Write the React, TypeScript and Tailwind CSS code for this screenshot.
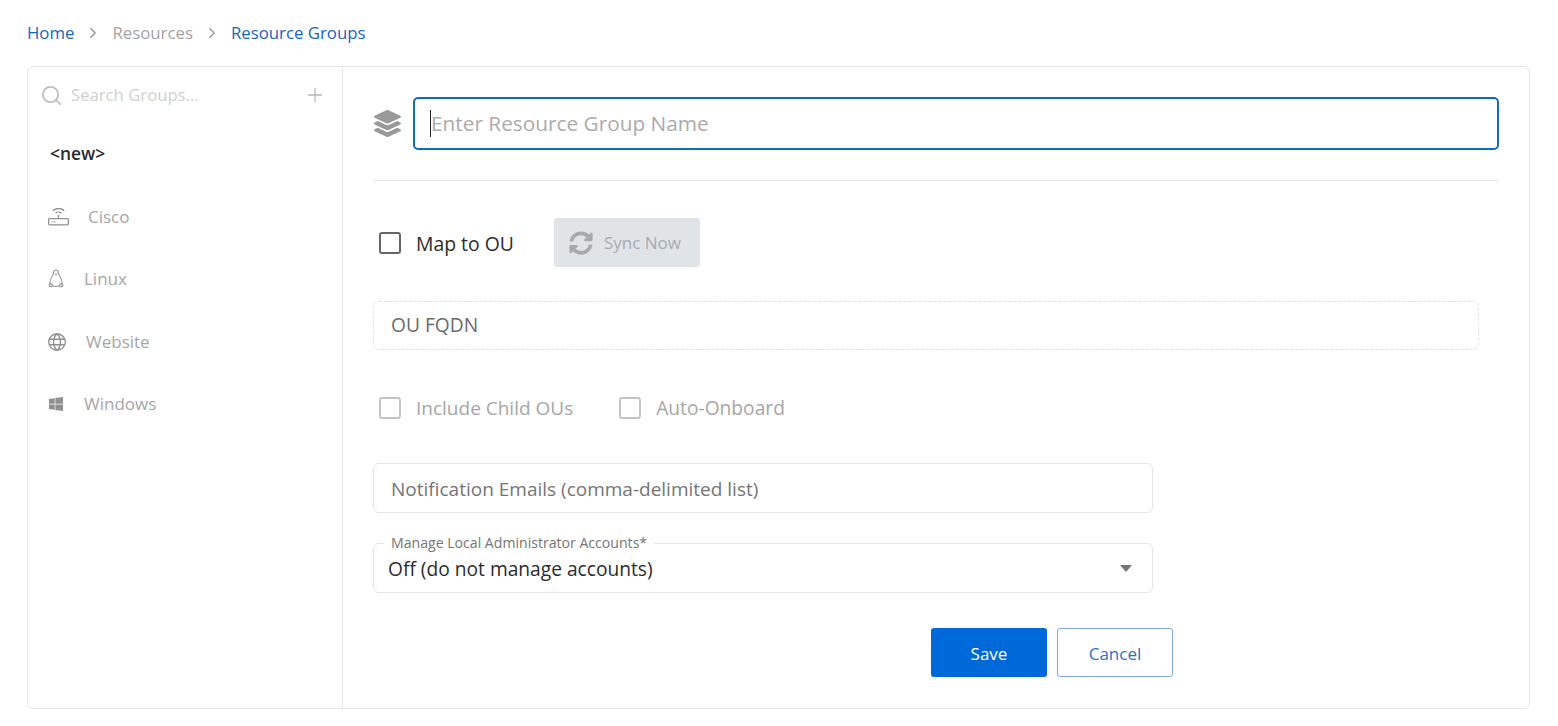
import { ChevronRight, Plus, Search } from "lucide-react";
import { FaLayerGroup, FaSyncAlt, FaWindows } from "react-icons/fa";
import { PiGlobe } from "react-icons/pi";

function RouterIcon() {
  return (
    <svg width="21" height="18" viewBox="0 0 21 18" fill="none" stroke="#8f8f8f" strokeWidth="1.3">
      <rect x="0.6" y="10.6" width="19.8" height="6.2" rx="1.4" />
      <path d="M10.5 10.5V7" />
      <path d="M7.6 5.2a4.2 4.2 0 0 1 5.8 0" />
      <path d="M4.8 2.8a8.2 8.2 0 0 1 11.4 0" />
      <path d="M3.5 13.8h1M6.2 13.8h1" strokeWidth="1.4" />
    </svg>
  );
}

function PenguinIcon() {
  return (
    <svg width="16" height="19" viewBox="0 0 16 19" fill="none" stroke="#9a9a9a" strokeWidth="1.1">
      <path d="M8 1C6.2 1 5.6 2.4 5.6 4c0 2.2-3.6 5-3.6 9 0 1 .2 1.6.6 2.2M8 1c1.8 0 2.4 1.4 2.4 3 0 2.2 3.6 5 3.6 9 0 1-.2 1.6-.6 2.2" />
      <path d="M6.6 4.6 8 5.6l1.4-1" />
      <path d="M5 17.4c-1 .4-3.2.2-3.8-.4-.4-.5.4-1.6.6-2.3.8-.4 1.6-.2 2.2.6.5.7 1 1.4 1 2.1Z" fill="#d6d6d6" />
      <path d="M11 17.4c1 .4 3.2.2 3.8-.4.4-.5-.4-1.6-.6-2.3-.8-.4-1.6-.2-2.2.6-.5.7-1 1.4-1 2.1Z" fill="#d6d6d6" />
      <path d="M5.2 17.2h5.6" />
    </svg>
  );
}

const groups = [
  { name: "Cisco", icon: <RouterIcon />, gap: "gap-[19px]", pl: "pl-[20px]" },
  { name: "Linux", icon: <PenguinIcon />, gap: "gap-[20px]", pl: "pl-[20px] pb-[1px]" },
  { name: "Website", icon: <PiGlobe size={22} color="#8f8f8f" />, gap: "gap-[18px]", pl: "pl-[18px]" },
  { name: "Windows", icon: <FaWindows size={16} color="#8f8f8f" />, gap: "gap-[20px]", pl: "pl-[20px]" },
];

function Checkbox({ dark }: { dark?: boolean }) {
  return (
    <span
      className={
        "block w-[22px] h-[22px] rounded-[3px] border-[2px] bg-white " +
        (dark ? "border-[#666666]" : "border-[#c4c4c4]")
      }
    />
  );
}

export default function App() {
  return (
    <div className="w-[1558px] h-[726px] bg-white overflow-hidden font-['Open_Sans',sans-serif] text-[17px] px-[27px]">
      <div className="flex items-center h-[66px] leading-none text-[16.8px]">
        <span className="text-[#1565c0]">Home</span>
        <ChevronRight size={18} strokeWidth={1.5} color="#8f8f8f" className="ml-[10px] mr-[10px]" />
        <span className="text-[#a3a3a3]">Resources</span>
        <ChevronRight size={18} strokeWidth={1.5} color="#8f8f8f" className="ml-[10px] mr-[10px]" />
        <span className="text-[#1565c0]">Resource Groups</span>
      </div>

      <div className="flex w-[1503px] h-[643px] border border-[#e6e6e6] rounded-[6px]">
        <aside className="w-[315px] shrink-0 border-r border-[#e6e6e6]">
          <div className="flex items-center h-[56px] pl-[12px] pr-[16px] text-[16.7px]">
            <Search size={23} strokeWidth={1.8} color="#bdbdbd" />
            <span className="ml-[8px] text-[#cfcfcf]">Search Groups...</span>
            <Plus size={22} strokeWidth={1.4} color="#b5b5b5" className="ml-auto" />
          </div>
          <div className="h-[63px] flex items-center pl-[22px] pb-[2px] text-[17.4px] font-semibold text-[#2b2b2b]">
            &lt;new&gt;
          </div>
          {groups.map((g) => (
            <div key={g.name} className={"h-[62.3px] flex items-center text-[#a6a6a6] " + g.gap + " " + g.pl}>
              {g.icon}
              <span>{g.name}</span>
            </div>
          ))}
        </aside>

        <main className="flex-1 pl-[30px] pr-[30px] pt-[30px]">
          <div className="flex items-center gap-[12px] pb-[30px] border-b border-[#e6e6e6]">
            <span className="w-[28px] flex justify-end">
              <FaLayerGroup size={27} color="#999999" />
            </span>
            <div className="relative flex-1 h-[53px] border-[2px] border-[#0f6cbd] rounded-[5px] flex items-center pl-[16px] pt-[1px] text-[20.8px] text-[#ababab]">
              <span className="absolute left-[15px] top-[11px] w-px h-[27px] bg-[#222222]" />
              Enter Resource Group Name
            </div>
          </div>

          <div className="flex items-center mt-[37px] h-[49px] pl-[6px]">
            <Checkbox dark />
            <span className="ml-[15px] pt-[2px] text-[19.4px] text-[#2b2b2b]">Map to OU</span>
            <div className="ml-[40px] w-[146px] h-[49px] rounded-[3px] bg-[#e1e4e7] flex items-center pl-[15px] pt-[1px] gap-[11px] text-[#a8abae]">
              <FaSyncAlt size={24} color="#a8abae" />
              <span>Sync Now</span>
            </div>
          </div>

          <div className="mt-[34px] w-[1106px] h-[49px] border border-dashed border-[#e2e2e2] rounded-[6px] flex items-center pl-[17px] text-[19.2px] text-[#6b6b6b]">
            OU FQDN
          </div>

          <div className="flex items-center mt-[47px] pl-[6px] h-[22px] text-[19px] text-[#a6a6a6]">
            <Checkbox />
            <span className="ml-[15px]">Include Child OUs</span>
            <span className="ml-[46px]">
              <Checkbox />
            </span>
            <span className="ml-[15px] text-[19.2px]">Auto-Onboard</span>
          </div>

          <div className="mt-[44px] w-[780px] h-[50px] border border-[#e6e6e6] rounded-[6px] flex items-center pl-[17px] pt-[2px] text-[19px] text-[#757575]">
            Notification Emails (comma-delimited list)
          </div>

          <div className="relative mt-[30px] w-[780px] h-[50px] border border-[#e6e6e6] rounded-[6px] flex items-center pl-[14px] pt-[2px] text-[19.2px] text-[#2b2b2b]">
            <span className="absolute left-[10px] -top-[10px] px-[7px] bg-white text-[14.1px] leading-[18px] text-[#757575]">
              Manage Local Administrator Accounts*
            </span>
            Off (do not manage accounts)
            <span className="absolute right-[20px] top-[21px] border-x-[6px] border-x-transparent border-t-[7px] border-t-[#757575]" />
          </div>

          <div className="flex gap-[10px] mt-[35px] ml-[558px]">
            <button className="w-[116px] h-[49px] pt-[2px] rounded-[3px] bg-[#0069d9] text-white">Save</button>
            <button className="w-[116px] h-[49px] pt-[2px] rounded-[3px] bg-white border border-[#7fa9dc] text-[#2a6fc9]">
              Cancel
            </button>
          </div>
        </main>
      </div>
    </div>
  );
}
